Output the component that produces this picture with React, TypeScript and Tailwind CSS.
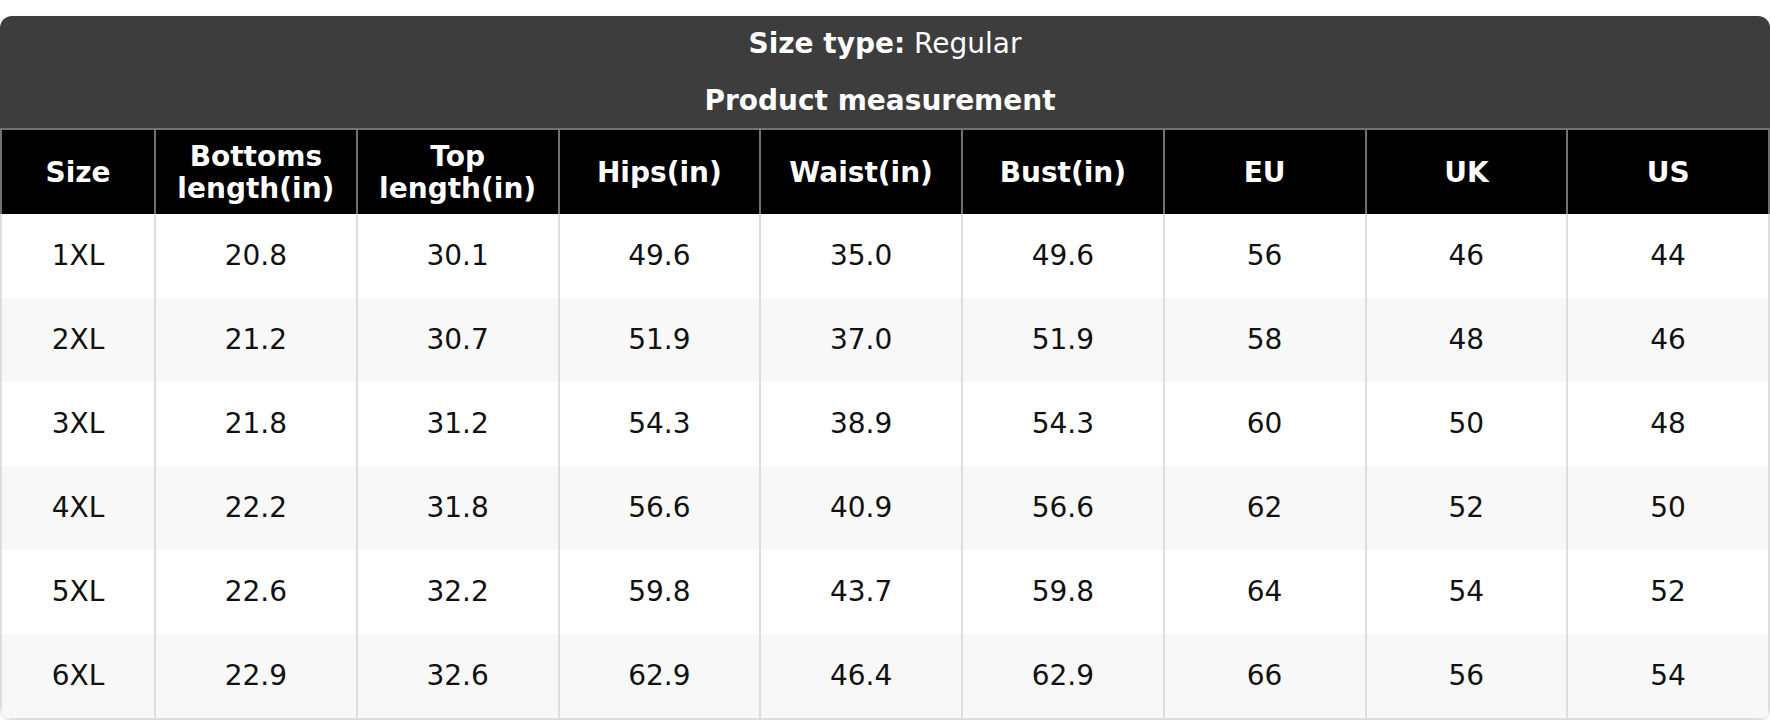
const columns = [
  "Size",
  "Bottoms length(in)",
  "Top length(in)",
  "Hips(in)",
  "Waist(in)",
  "Bust(in)",
  "EU",
  "UK",
  "US",
];

const headerLines: Record<string, string[]> = {
  "Bottoms length(in)": ["Bottoms", "length(in)"],
  "Top length(in)": ["Top", "length(in)"],
};

const rows = [
  ["1XL", "20.8", "30.1", "49.6", "35.0", "49.6", "56", "46", "44"],
  ["2XL", "21.2", "30.7", "51.9", "37.0", "51.9", "58", "48", "46"],
  ["3XL", "21.8", "31.2", "54.3", "38.9", "54.3", "60", "50", "48"],
  ["4XL", "22.2", "31.8", "56.6", "40.9", "56.6", "62", "52", "50"],
  ["5XL", "22.6", "32.2", "59.8", "43.7", "59.8", "64", "54", "52"],
  ["6XL", "22.9", "32.6", "62.9", "46.4", "62.9", "66", "56", "54"],
];

export default function App() {
  return (
    <div className="min-h-screen bg-white pt-4 font-['DejaVu_Sans',sans-serif]">
      <div className="overflow-hidden rounded-xl shadow-[0_1px_3px_rgba(0,0,0,0.14)]">
        {/* ── Title block ─────────────────────────────── */}
        <div className="flex h-[112px] flex-col items-center bg-[#3d3d3d] pt-[12px] text-[28px] leading-8 text-white">
          <p>
            <span className="font-bold">Size type:</span> Regular
          </p>
          <p className="mt-[25px] pr-[10px] font-bold">Product measurement</p>
        </div>

        {/* ── Column headings ─────────────────────────── */}
        <div className="grid h-[86px] grid-cols-[152px_repeat(8,minmax(0,1fr))] border-x-2 border-t-2 border-[#707070] bg-black text-[28px] leading-8 font-bold text-white">
          {columns.map((col, i) => (
            <div
              key={col}
              className={`flex flex-col items-center justify-center pt-[2px] text-center ${
                i > 0 ? "border-l-2 border-[#707070]" : ""
              }`}
            >
              {(headerLines[col] ?? [col]).map((line) => (
                <span key={line}>{line}</span>
              ))}
            </div>
          ))}
        </div>

        {/* ── Measurements ────────────────────────────── */}
        <div className="rounded-b-xl border-x-2 border-b-2 border-[#dedede] text-[28px] text-[#111111]">
          {rows.map((row, r) => (
            <div
              key={row[0]}
              className={`grid h-[84px] grid-cols-[152px_repeat(8,minmax(0,1fr))] ${
                r % 2 === 1 ? "bg-[#f8f8f8]" : "bg-white"
              }`}
            >
              {row.map((cell, i) => (
                <div
                  key={i}
                  className={`flex items-center justify-center ${
                    i > 0 ? "border-l-2 border-[#dedede]" : ""
                  }`}
                >
                  {cell}
                </div>
              ))}
            </div>
          ))}
        </div>
      </div>
    </div>
  );
}
